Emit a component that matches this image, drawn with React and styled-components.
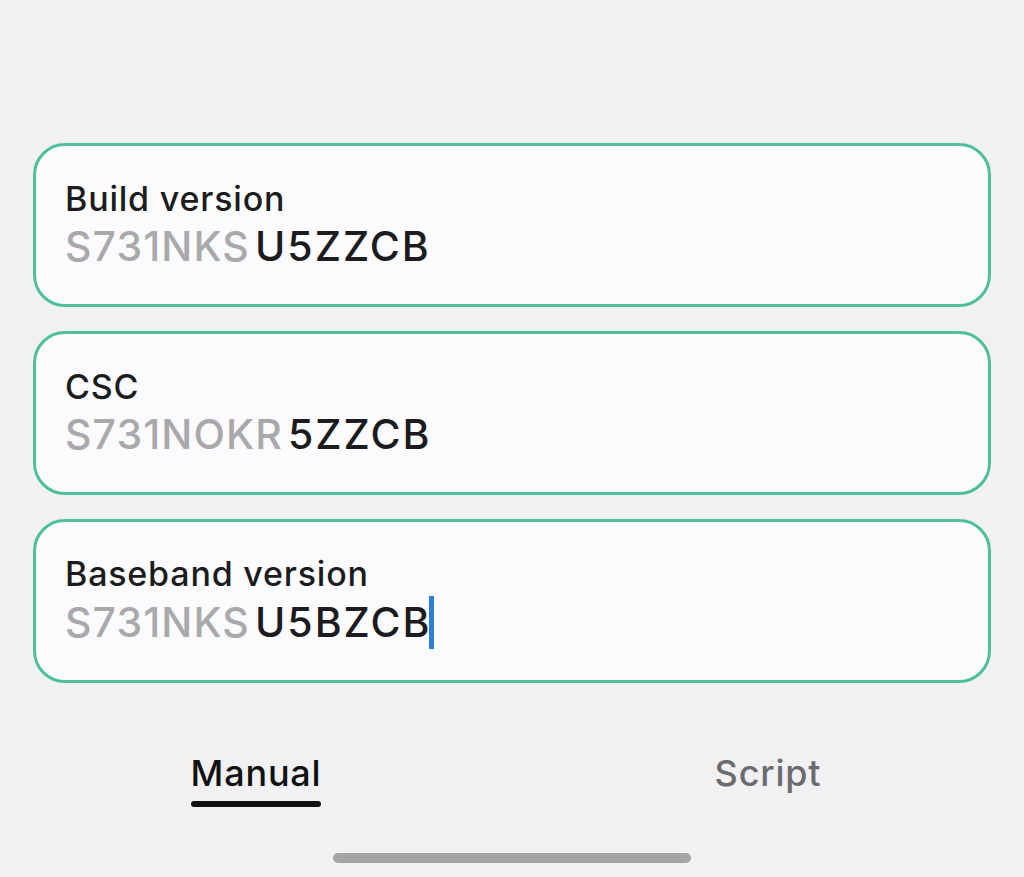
import React from "react";
import styled, { createGlobalStyle } from "styled-components";

const Global = createGlobalStyle`
  html, body { margin: 0; padding: 0; background: #f1f1f3; }
  body { font-family: Inter, "Noto Sans", sans-serif; -webkit-font-smoothing: antialiased; }
  #root { min-height: 877px; }
`;

const Screen = styled.div`
  width: 1024px;
  height: 877px;
  background: #f1f1f3;
  display: flex;
  flex-direction: column;
  box-sizing: border-box;
  padding-top: 143px;
  overflow: hidden;
`;

const Fields = styled.div`
  display: flex;
  flex-direction: column;
  gap: 24px;
  padding: 0 33px;
`;

const Card = styled.div`
  height: 164px;
  box-sizing: border-box;
  border: 3px solid #4fbf98;
  border-radius: 32px;
  background: #fbfbfd;
  padding: 0 29px;
  display: flex;
  flex-direction: column;
  justify-content: center;
  gap: 2px;
`;

const Label = styled.div`
  font-size: 34px;
  font-weight: 450;
  line-height: 40px;
  color: #1c1c1e;
  letter-spacing: 0.8px;
`;

const Value = styled.div`
  font-size: 41px;
  font-weight: 450;
  line-height: 50px;
  letter-spacing: 2px;
  display: flex;
  align-items: center;
`;

const Prefix = styled.span`
  color: #a9a9ab;
  letter-spacing: 1.1px;
  margin-right: 5px;
`;

const Suffix = styled.span`
  color: #1c1c1e;
`;

const Caret = styled.span`
  display: inline-block;
  width: 5px;
  height: 53px;
  background: #2c80d8;
  margin-left: -2px;
`;

const Tabs = styled.div`
  display: grid;
  grid-template-columns: 1fr 1fr;
  margin-top: 68px;
`;

const Tab = styled.div`
  display: flex;
  justify-content: center;
`;

const TabLabel = styled.div`
  font-size: 36px;
  font-weight: 450;
  line-height: 44px;
  letter-spacing: 0.8px;
  color: ${(p) => (p.$active ? "#111" : "#6b6b6d")};
  padding-bottom: 12px;
  position: relative;
  &::after {
    content: "";
    display: ${(p) => (p.$active ? "block" : "none")};
    position: absolute;
    left: 0;
    right: 0;
    bottom: 0;
    height: 6px;
    border-radius: 3px;
    background: #111;
  }
`;

const HomeBar = styled.div`
  align-self: center;
  width: 358px;
  height: 10px;
  border-radius: 5px;
  background: #a4a4a6;
  margin-top: 46px;
`;

const fields = [
  { label: "Build version", prefix: "S731NKS", suffix: "U5ZZCB" },
  { label: "CSC", prefix: "S731NOKR", suffix: "5ZZCB" },
  { label: "Baseband version", prefix: "S731NKS", suffix: "U5BZCB", caret: true },
];

export default function App() {
  return (
    <>
      <Global />
      <Screen>
        <Fields>
          {fields.map((f) => (
            <Card key={f.label}>
              <Label>{f.label}</Label>
              <Value>
                <Prefix>{f.prefix}</Prefix>
                <Suffix>{f.suffix}</Suffix>
                {f.caret && <Caret />}
              </Value>
            </Card>
          ))}
        </Fields>
        <Tabs>
          <Tab>
            <TabLabel $active>Manual</TabLabel>
          </Tab>
          <Tab>
            <TabLabel>Script</TabLabel>
          </Tab>
        </Tabs>
        <HomeBar />
      </Screen>
    </>
  );
}
